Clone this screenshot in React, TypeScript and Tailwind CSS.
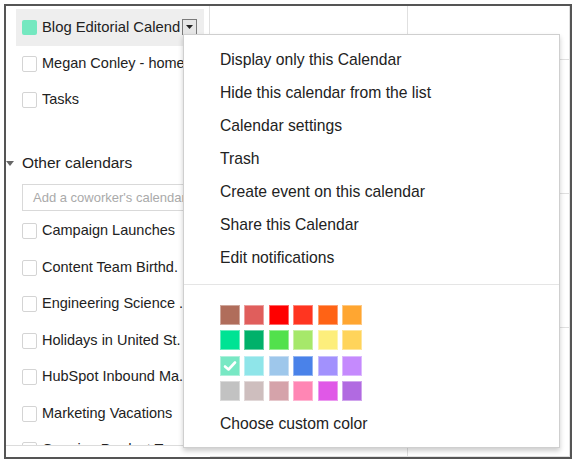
const myCalendars = ["Megan Conley - home", "Tasks"];

const otherCalendars = [
  "Campaign Launches",
  "Content Team Birthd.",
  "Engineering Science .",
  "Holidays in United St.",
  "HubSpot Inbound Ma.",
  "Marketing Vacations",
  "Ongoing Product Tea.",
];

const menuItems = [
  "Display only this Calendar",
  "Hide this calendar from the list",
  "Calendar settings",
  "Trash",
  "Create event on this calendar",
  "Share this Calendar",
  "Edit notifications",
];

const swatches = [
  ["#b06d5b", "#e05e5c", "#ff0000", "#ff3520", "#ff6315", "#ffa631"],
  ["#00e394", "#00b16a", "#52e14c", "#a6e86a", "#fdee7c", "#ffd45b"],
  ["#78e8c4", "#8fe5e9", "#9ec7eb", "#4a82e9", "#a291fd", "#c58afd"],
  ["#c2c2c2", "#cebebe", "#d5a3aa", "#ff86b4", "#e058e7", "#b16ae1"],
];

const font = { fontFamily: '"Liberation Sans", Arial, sans-serif' };

function Checkbox() {
  return <span className="w-[15px] h-[16px] shrink-0 rounded-[2px] border border-[#d4d4d4] bg-white" />;
}

function CalendarRow({ name }: { name: string }) {
  return (
    <div className="ml-[10px] w-[188px] h-[36.5px] pl-[6px] flex items-center gap-[5px]">
      <Checkbox />
      <span className="flex-1 overflow-hidden whitespace-nowrap text-[14.5px] text-[#222]">{name}</span>
    </div>
  );
}

function ColorMenu() {
  return (
    <div className="absolute left-[177px] top-[28px] w-[377px] h-[414px] bg-white border border-[#cfcfcf] shadow-[0_3px_5px_rgba(0,0,0,0.2)] pt-[8.5px]">
      {menuItems.map((item) => (
        <div key={item} className="h-[33px] pl-[36px] flex items-center text-[15.7px] text-[#222]">
          {item}
        </div>
      ))}
      <div className="mt-[9px] h-px bg-[#e5e5e5]" />
      <div className="mt-[20.5px] ml-[36px] grid grid-cols-[repeat(6,20px)] gap-x-[4.4px] gap-y-[5.3px]">
        {swatches.flat().map((c, i) => (
          <div
            key={i}
            className="w-[20px] h-[20px] border border-white/40 flex items-center justify-center"
            style={{ backgroundColor: c }}
          >
            {i === 12 && (
              <svg width="14" height="12" viewBox="0 0 14 12">
                <path d="M2 6.5 L5.5 9.5 L12 2.5" fill="none" stroke="white" strokeWidth="2.6" strokeLinecap="round" strokeLinejoin="round" />
              </svg>
            )}
          </div>
        ))}
      </div>
      <div className="mt-[9.5px] h-[26px] pl-[36px] flex items-center text-[15.7px] text-[#222]">
        Choose custom color
      </div>
    </div>
  );
}

export default function App() {
  return (
    <div className="w-[577px] h-[465px] bg-white pt-[4px] pl-[4px]" style={font}>
      <div className="relative w-[568px] h-[455px] border-2 border-[#555] flex overflow-hidden">
        <div className="w-[204px] h-[440px] shrink-0 border-r border-[#e0e0e0] overflow-hidden pt-[3px]">
          <div className="border-b border-[#dcdcdc] h-[437px] overflow-hidden">
            <div className="ml-[10px] w-[188px] h-[36.5px] pl-[6px] pr-[7px] bg-[#eeeeee] flex items-center">
              <span className="w-[15px] h-[15px] shrink-0 rounded-[2px] bg-[#74e8c0]" />
              <span className="ml-[5px] flex-1 overflow-hidden whitespace-nowrap text-[14.8px] text-[#222]">
                Blog Editorial Calendar
              </span>
              <span className="ml-[2px] w-[15px] h-[16px] shrink-0 border border-[#7a7a7a] bg-[#e6e6e6] flex items-center justify-center">
                <svg width="7" height="4" viewBox="0 0 7 4">
                  <path d="M0 0 H7 L3.5 4 Z" fill="#222" />
                </svg>
              </span>
            </div>
            {myCalendars.map((n) => (
              <CalendarRow key={n} name={n} />
            ))}
            <div className="mt-[29.5px] h-[30px] flex items-center">
              <svg width="8" height="5" viewBox="0 0 8 5">
                <path d="M0 0 H8 L4 5 Z" fill="#666" />
              </svg>
              <span className="ml-[8px] text-[15.5px] text-[#222]">Other calendars</span>
            </div>
            <div className="mt-[6px] ml-[16px] w-[190px] h-[27px] border border-[#d9d9d9] pl-[10px] flex items-center text-[13px] text-[#aaa] whitespace-nowrap overflow-hidden">
              Add a coworker's calendar
            </div>
            <div className="mt-[1.75px]">
              {otherCalendars.map((n) => (
                <CalendarRow key={n} name={n} />
              ))}
            </div>
          </div>
        </div>
        <div className="flex-1 grid grid-cols-[198px_1fr] grid-rows-[54px_134px_134px_1fr]">
          {Array.from({ length: 8 }).map((_, i) => (
            <div key={i} className="border-r border-b border-[#e0e0e0]" />
          ))}
        </div>
        <ColorMenu />
      </div>
    </div>
  );
}
